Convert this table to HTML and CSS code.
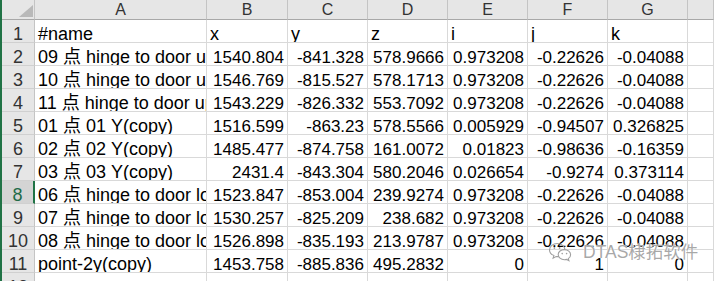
FILE: index.html
```html
<!DOCTYPE html>
<html lang="zh">
<head>
<meta charset="utf-8">
<title>Sheet</title>
<link rel="stylesheet" href="styles.css">
</head>
<body>
<div class="sheet">
  <div class="row head">
    <div class="corner"><span class="tri"></span></div>
    <div class="ch">A</div><div class="ch">B</div><div class="ch">C</div><div class="ch">D</div>
    <div class="ch">E</div><div class="ch">F</div><div class="ch">G</div><div class="ch"></div>
  </div>
  <div class="row">
    <div class="rh">1</div><div class="c t">#name</div><div class="c t">x</div><div class="c t">y</div><div class="c t">z</div><div class="c t">i</div><div class="c t">j</div><div class="c t">k</div><div class="c"></div>
  </div>
  <div class="row">
    <div class="rh">2</div><div class="c t">09 点 hinge to door up</div><div class="c n">1540.804</div><div class="c n">-841.328</div><div class="c n">578.9666</div><div class="c n">0.973208</div><div class="c n">-0.22626</div><div class="c n">-0.04088</div><div class="c"></div>
  </div>
  <div class="row">
    <div class="rh">3</div><div class="c t">10 点 hinge to door up</div><div class="c n">1546.769</div><div class="c n">-815.527</div><div class="c n">578.1713</div><div class="c n">0.973208</div><div class="c n">-0.22626</div><div class="c n">-0.04088</div><div class="c"></div>
  </div>
  <div class="row">
    <div class="rh">4</div><div class="c t">11 点 hinge to door up</div><div class="c n">1543.229</div><div class="c n">-826.332</div><div class="c n">553.7092</div><div class="c n">0.973208</div><div class="c n">-0.22626</div><div class="c n">-0.04088</div><div class="c"></div>
  </div>
  <div class="row">
    <div class="rh">5</div><div class="c t">01 点 01 Y(copy)</div><div class="c n">1516.599</div><div class="c n">-863.23</div><div class="c n">578.5566</div><div class="c n">0.005929</div><div class="c n">-0.94507</div><div class="c n">0.326825</div><div class="c"></div>
  </div>
  <div class="row">
    <div class="rh">6</div><div class="c t">02 点 02 Y(copy)</div><div class="c n">1485.477</div><div class="c n">-874.758</div><div class="c n">161.0072</div><div class="c n">0.01823</div><div class="c n">-0.98636</div><div class="c n">-0.16359</div><div class="c"></div>
  </div>
  <div class="row">
    <div class="rh">7</div><div class="c t">03 点 03 Y(copy)</div><div class="c n">2431.4</div><div class="c n">-843.304</div><div class="c n">580.2046</div><div class="c n">0.026654</div><div class="c n">-0.9274</div><div class="c n">0.373114</div><div class="c"></div>
  </div>
  <div class="row">
    <div class="rh sel">8</div><div class="c t">06 点 hinge to door low</div><div class="c n">1523.847</div><div class="c n">-853.004</div><div class="c n">239.9274</div><div class="c n">0.973208</div><div class="c n">-0.22626</div><div class="c n">-0.04088</div><div class="c"></div>
  </div>
  <div class="row">
    <div class="rh">9</div><div class="c t">07 点 hinge to door low</div><div class="c n">1530.257</div><div class="c n">-825.209</div><div class="c n">238.682</div><div class="c n">0.973208</div><div class="c n">-0.22626</div><div class="c n">-0.04088</div><div class="c"></div>
  </div>
  <div class="row">
    <div class="rh">10</div><div class="c t">08 点 hinge to door low</div><div class="c n">1526.898</div><div class="c n">-835.193</div><div class="c n">213.9787</div><div class="c n">0.973208</div><div class="c n">-0.22626</div><div class="c n">-0.04088</div><div class="c"></div>
  </div>
  <div class="row">
    <div class="rh">11</div><div class="c t">point-2y(copy)</div><div class="c n">1453.758</div><div class="c n">-885.836</div><div class="c n">495.2832</div><div class="c n">0</div><div class="c n">1</div><div class="c n">0</div><div class="c"></div>
  </div>
  <div class="row">
    <div class="rh">12</div><div class="c"></div><div class="c"></div><div class="c"></div><div class="c"></div><div class="c"></div><div class="c"></div><div class="c"></div><div class="c"></div>
  </div>
</div>
<div class="wm">
  <svg class="wx" width="24" height="20" viewBox="0 0 24 20" fill="none" stroke="#a0a0a0" stroke-width="1.1">
    <path d="M10.5 14.6c-.8.1-1.6.1-2.4 0l-3 1.6.8-2.6C3.4 12.4 1.5 10.3 1.5 7.9 1.5 4.3 5 1.5 9.2 1.5c3.9 0 7.2 2.4 7.7 5.6"/>
    <path d="M16.4 7.6c3.5 0 6.2 2.3 6.2 5.1 0 1.6-.9 3-2.3 3.9l.6 2-2.3-1.2c-.7.2-1.4.3-2.2.3-3.5 0-6.2-2.3-6.2-5.1s2.7-5 6.2-5z"/>
    <circle cx="6.4" cy="6" r=".9" fill="#a0a0a0" stroke="none"/>
    <circle cx="11.6" cy="6" r=".9" fill="#a0a0a0" stroke="none"/>
    <circle cx="14.2" cy="11.6" r=".8" fill="#a0a0a0" stroke="none"/>
    <circle cx="18.6" cy="11.6" r=".8" fill="#a0a0a0" stroke="none"/>
  </svg>
  <span class="wm-text">DTAS棣拓软件</span>
</div>
</body>
</html>
```
FILE: styles.css
```css
html, body {
  margin: 0;
  padding: 0;
  overflow: hidden;
  background: #ffffff;
}

body {
  position: relative;
  height: 281px;
  box-sizing: border-box;
  border-left: 2px solid #217346;
}

.sheet {
  display: flex;
  flex-direction: column;
}

.row {
  display: grid;
  grid-template-columns: 33px 172px 81px 80px 80px 80px 80px 80px 1fr;
  height: 23px;
  flex: none;
}

.row.head {
  height: 20px;
}

.row > div {
  box-sizing: border-box;
  overflow: hidden;
  white-space: nowrap;
}

.corner {
  background: #e6e6e6;
  border-right: 1px solid #c4c4c4;
  border-bottom: 1px solid #a8a8a8;
  display: flex;
  align-items: flex-end;
  justify-content: flex-end;
  padding: 0 1px 2px 0;
}

.tri {
  width: 14px;
  height: 12px;
  background: #b9b9b9;
  clip-path: polygon(100% 0, 100% 100%, 0 100%);
}

.ch {
  background: #e6e6e6;
  border-right: 1px solid #c4c4c4;
  border-bottom: 1px solid #a8a8a8;
  text-align: center;
  font: 16px "Liberation Sans", Arial, sans-serif;
  line-height: 20px;
  color: #333333;
}

.rh {
  background: #e6e6e6;
  border-right: 1px solid #c4c4c4;
  border-bottom: 1px solid #d0d0d0;
  text-align: center;
  font: 18px "Liberation Sans", Arial, sans-serif;
  line-height: 17px;
  padding-top: 6px;
  color: #333333;
}

.rh.sel {
  background: #d4d4d4;
  color: #1d6b48;
  border-right: 2px solid #217346;
}

.c {
  border-right: 1px solid #d9d9d9;
  border-bottom: 1px solid #d9d9d9;
  font: 17px "Liberation Sans", Arial, "Noto Sans CJK SC", sans-serif;
  line-height: 17px;
  padding: 6px 3px 0 3px;
  color: #000000;
}

.c.t {
  font-size: 18px;
}

.c.n {
  text-align: right;
}

.wm {
  position: absolute;
  left: 546px;
  top: 242px;
  display: flex;
  align-items: center;
  gap: 11px;
}

.wm-text {
  font: 17.5px "Liberation Sans", "Noto Sans CJK SC", sans-serif;
  color: rgba(140, 140, 140, 0.75);
  text-shadow: 0 0 1px #ffffff, 0 0 1px #ffffff;
  line-height: 20px;
}
```
